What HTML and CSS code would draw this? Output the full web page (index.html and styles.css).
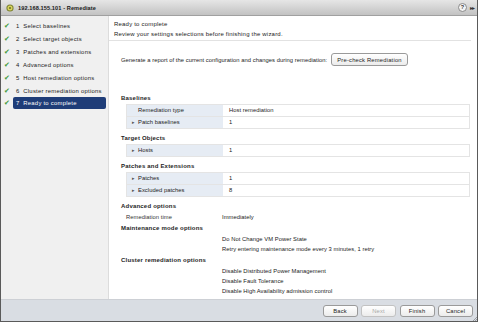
FILE: index.html
```html
<!DOCTYPE html>
<html>
<head>
<meta charset="utf-8">
<link rel="stylesheet" href="styles.css">
</head>
<body>
<div class="window">
  <div class="titlebar">
    <svg class="appicon" width="8" height="8" viewBox="0 0 8 8"><circle cx="4" cy="4" r="3.6" fill="#7d8233"/><circle cx="4" cy="4" r="2.5" fill="#d9d55c"/><circle cx="4" cy="4" r="1.1" fill="#6f7230"/></svg>
    <span class="title">192.168.155.101 - Remediate</span>
    <span class="spacer"></span>
    <span class="help">?</span>
    <span class="more">&#9656;&#9656;</span>
  </div>
  <div class="body">
    <nav class="steps">
      <div class="step"><span class="check">&#10004;</span><span class="label">1&nbsp; Select baselines</span></div>
      <div class="step"><span class="check">&#10004;</span><span class="label">2&nbsp; Select target objects</span></div>
      <div class="step"><span class="check">&#10004;</span><span class="label">3&nbsp; Patches and extensions</span></div>
      <div class="step"><span class="check">&#10004;</span><span class="label">4&nbsp; Advanced options</span></div>
      <div class="step"><span class="check">&#10004;</span><span class="label">5&nbsp; Host remediation options</span></div>
      <div class="step"><span class="check">&#10004;</span><span class="label">6&nbsp; Cluster remediation options</span></div>
      <div class="step current"><span class="check">&#10004;</span><span class="label">7&nbsp; Ready to complete</span></div>
    </nav>
    <main class="content">
      <header class="head">
        <div class="head-title">Ready to complete</div>
        <div class="head-sub">Review your settings selections before finishing the wizard.</div>
      </header>
      <div class="pane">
        <div class="report">
          <span>Generate a report of the current configuration and changes during remediation:</span>
          <button class="btn precheck">Pre-check Remediation</button>
        </div>

        <div class="section">Baselines</div>
        <div class="table">
          <div class="row"><div class="key">Remediation type</div><div class="val">Host remediation</div></div>
          <div class="row"><div class="key"><span class="tri">&#9656;</span>Patch baselines</div><div class="val">1</div></div>
        </div>

        <div class="section">Target Objects</div>
        <div class="table">
          <div class="row"><div class="key"><span class="tri">&#9656;</span>Hosts</div><div class="val">1</div></div>
        </div>

        <div class="section">Patches and Extensions</div>
        <div class="table">
          <div class="row"><div class="key"><span class="tri">&#9656;</span>Patches</div><div class="val">1</div></div>
          <div class="row"><div class="key"><span class="tri">&#9656;</span>Excluded patches</div><div class="val">8</div></div>
        </div>

        <div class="section">Advanced options</div>
        <div class="plain"><div class="pkey">Remediation time</div><div class="pval">Immediately</div></div>

        <div class="section">Maintenance mode options</div>
        <div class="list">
          <div>Do Not Change VM Power State</div>
          <div>Retry entering maintenance mode every 3 minutes, 1 retry</div>
        </div>

        <div class="section gap">Cluster remediation options</div>
        <div class="list">
          <div>Disable Distributed Power Management</div>
          <div>Disable Fault Tolerance</div>
          <div>Disable High Availability admission control</div>
        </div>
      </div>
    </main>
  </div>
  <footer class="footer">
    <button class="btn">Back</button>
    <button class="btn disabled">Next</button>
    <button class="btn">Finish</button>
    <button class="btn">Cancel</button>
    <svg class="grip" width="5" height="5" viewBox="0 0 5 5"><path d="M1 5L5 1M3 5L5 3" stroke="#8a8d92" stroke-width="0.8"/></svg>
  </footer>
</div>
</body>
</html>
```
FILE: styles.css
```css
html, body {
  margin: 0;
  padding: 0;
  background: #ffffff;
}
body {
  font-family: "Liberation Sans", Arial, sans-serif;
  font-size: 5.8px;
  letter-spacing: 0.05px;
  color: #222;
}
.window {
  width: 478px;
  height: 322px;
  box-sizing: border-box;
  border: 1px solid #5a5a5a;
  border-top: none;
  display: flex;
  flex-direction: column;
  overflow: hidden;
}
.titlebar {
  height: 15px;
  flex: none;
  display: flex;
  align-items: center;
  padding: 0 4px 0 5px;
  background: linear-gradient(#e6e6e6, #c2c2c2);
  border-bottom: 1px solid #a0a0a0;
}
.appicon { margin-right: 4px; }
.title {
  font-weight: bold;
  font-size: 5.6px;
  color: #1a1a1a;
  letter-spacing: 0.1px;
}
.spacer { flex: 1; }
.help {
  width: 7px;
  height: 7px;
  border-radius: 50%;
  background: #f3f3f3;
  border: 1px solid #8a8a8a;
  font-size: 5.5px;
  font-weight: bold;
  line-height: 7px;
  text-align: center;
  color: #333;
  margin-right: 3px;
}
.more {
  font-size: 6px;
  color: #333;
  letter-spacing: -1.5px;
}
.body {
  flex: 1;
  display: flex;
  min-height: 0;
}
.steps {
  width: 108px;
  flex: none;
  background: #f0f0f0;
  border-right: 1px solid #dcdcdc;
  padding-top: 4px;
  box-sizing: border-box;
}
.step {
  height: 12.85px;
  display: flex;
  align-items: center;
}
.check {
  width: 12px;
  flex: none;
  text-align: center;
  color: #3f9a3a;
  font-size: 7px;
  font-family: "DejaVu Sans", sans-serif;
}
.label {
  flex: 1;
  margin-right: 2px;
  padding-left: 3px;
  height: 12px;
  line-height: 12px;
  color: #222;
  white-space: nowrap;
  letter-spacing: 0.25px;
  font-size: 5.9px;
}
.step.current .label {
  background: #1f3d78;
  color: #fff;
  border-radius: 2px;
}
.content {
  flex: 1;
  display: flex;
  flex-direction: column;
  background: #fff;
  min-width: 0;
}
.head {
  padding: 3px 0 1px 5px;
  margin-right: 6px;
  border-bottom: 1px solid #e2e2e2;
}
.head-title, .head-sub {
  font-size: 6px;
  line-height: 10px;
  letter-spacing: 0.2px;
}
.pane {
  padding: 12px 7px 0 12px;
  flex: 1;
}
.report {
  display: flex;
  align-items: center;
  gap: 4px;
  margin-bottom: 27px;
}
.btn {
  font-family: inherit;
  font-size: 5.8px;
  letter-spacing: 0.2px;
  color: #222;
  background: linear-gradient(#ffffff, #ececec);
  border: 1px solid #9a9a9a;
  border-radius: 3px;
  height: 13px;
  padding: 0 5px;
  margin: 0;
}
.section {
  font-weight: bold;
  font-size: 6px;
  letter-spacing: 0.2px;
  line-height: 11px;
  color: #1e1e1e;
}
.section.gap { margin-top: 1px; }
.table {
  margin: 0 0 4px 5px;
  border-top: 1px solid #e4e4e4;
  border-left: 1px solid #e4e4e4;
  border-right: 1px solid #e4e4e4;
}
.row {
  display: flex;
  height: 12px;
  line-height: 11px;
  border-bottom: 1px solid #e4e4e4;
  box-sizing: border-box;
}
.key {
  width: 96px;
  flex: none;
  background: #e6ecf4;
  padding-left: 11px;
  box-sizing: border-box;
}
.tri {
  display: inline-block;
  width: 6px;
  margin-left: -6px;
  font-size: 5px;
  color: #555;
}
.val {
  flex: 1;
  padding-left: 6px;
}
.plain {
  display: flex;
  line-height: 10px;
  margin-bottom: 1px;
}
.pkey { width: 101px; padding-left: 5px; box-sizing: border-box; color: #333; }
.list {
  padding-left: 101px;
}
.list div { line-height: 10px; }
.footer {
  height: 21px;
  flex: none;
  background: #d9dde3;
  border-top: 1px solid #cdd0d5;
  display: flex;
  justify-content: flex-end;
  align-items: center;
  gap: 3.5px;
  padding-right: 4px;
  position: relative;
}
.footer .btn {
  width: 35px;
  height: 12px;
  padding: 0;
}
.footer .btn.disabled {
  color: #a8a8a8;
  border-color: #c2c2c2;
}
.grip {
  position: absolute;
  right: 0;
  bottom: 0;
}
```
